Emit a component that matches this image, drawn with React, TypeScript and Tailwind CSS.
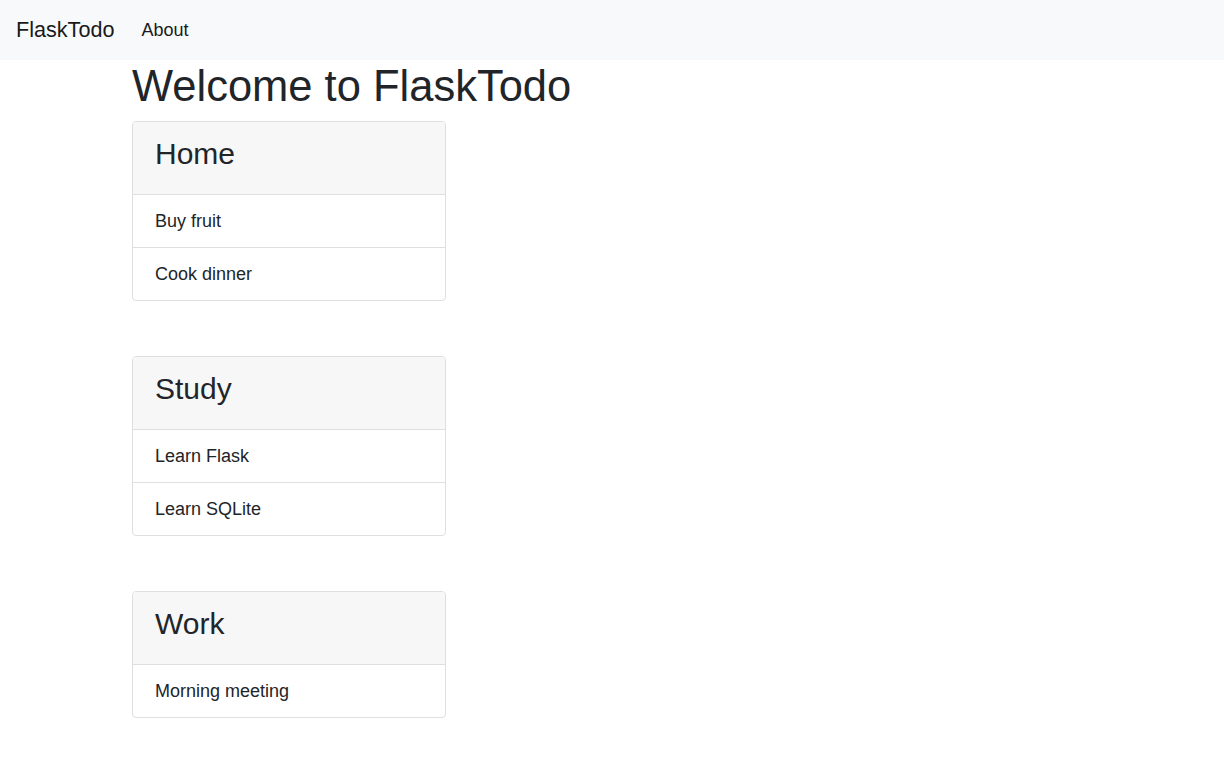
import React from 'react';

// 待办分组数据
const groups: { title: string; items: string[] }[] = [
  { title: 'Home', items: ['Buy fruit', 'Cook dinner'] },
  { title: 'Study', items: ['Learn Flask', 'Learn SQLite'] },
  { title: 'Work', items: ['Morning meeting'] },
];

const TodoCard: React.FC<{ title: string; items: string[] }> = ({ title, items }) => (
  <div className="w-[314px] rounded-[4px] border border-[#dfdfdf] overflow-hidden bg-white">
    {/* 卡片标题 */}
    <div className="h-[72px] bg-[#f7f7f7] px-[22px] pt-[14px]">
      <h3 className="text-[30px] leading-[36px] text-[#212529]">{title}</h3>
    </div>
    {/* 列表项 */}
    {items.map((item) => (
      <div
        key={item}
        className="h-[53px] border-t border-[#dfdfdf] px-[22px] flex items-center text-[18px] leading-[27px] text-[#212529]"
      >
        {item}
      </div>
    ))}
  </div>
);

export default function App() {
  return (
    <div className="min-h-screen bg-white font-['Liberation_Sans',Arial,sans-serif] text-[#212529]">
      {/* 顶部导航栏 */}
      <nav className="h-[60px] bg-[#f8f9fa] flex items-center px-4">
        <span className="text-[21.6px] leading-[30px] text-[#1a1a1a]">FlaskTodo</span>
        <span className="ml-[27px] text-[18px] leading-[27px] text-[#1a1a1a]">About</span>
      </nav>

      {/* 主内容区域 */}
      <main className="ml-[132px]">
        <h1 className="text-[43.5px] leading-[52px] mb-[9px]">Welcome to FlaskTodo</h1>
        <div className="flex flex-col gap-[55px]">
          {groups.map((g) => (
            <TodoCard key={g.title} title={g.title} items={g.items} />
          ))}
        </div>
      </main>
    </div>
  );
}
